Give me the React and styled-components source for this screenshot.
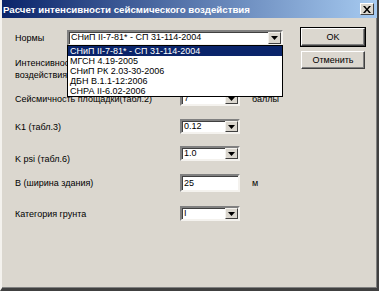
import React from 'react'
import styled, { createGlobalStyle } from 'styled-components'

const GlobalStyle = createGlobalStyle`
	html, body {
		margin: 0;
		padding: 0;
		background: #dbd7cf;
	}
	* {
		box-sizing: border-box;
	}
`

const norms = [
	'СНиП II-7-81* - СП 31-114-2004',
	'МГСН 4.19-2005',
	'СНиП РК 2.03-30-2006',
	'ДБН В.1.1-12:2006',
	'СНРА II-6.02-2006',
]

const rows = [
	{ label: 'Сейсмичность площадки(табл.2)', value: '7', unit: 'баллы', gap: 10 },
	{ label: 'K1 (табл.3)', value: '0.12', gap: 13 },
	{ label: 'K psi (табл.6)', value: '1.0', gap: 12, drop: 5 },
	{ label: 'B (ширина здания)', value: '25', unit: 'м', gap: 13, input: true },
	{ label: 'Категория грунта', value: 'I', gap: 14 },
]

export default function App() {
	return (
		<Window>
			<GlobalStyle />
			<TitleBar>
				<Title>Расчет интенсивности сейсмического воздействия</Title>
				<CloseButton>
					<svg width="8" height="7" viewBox="0 0 8 7">
						<path d="M0 0h2l2 2.5L6 0h2L5 3.5 8 7H6L4 4.5 2 7H0l3-3.5z" fill="#000" />
					</svg>
				</CloseButton>
			</TitleBar>
			<Body>
				<Form>
					<NormRow>
						<NormLabel>Нормы</NormLabel>
						<Combo width={216} tall>
							<Field>{norms[0]}</Field>
							<Arrow />
						</Combo>
					</NormRow>
					<DropList>
						{norms.map((n, i) => <Item key={i} selected={i === 0}>{n}</Item>)}
					</DropList>
					<TwoLineLabel>
						Интенсивность сейсмического<br />воздействия
					</TwoLineLabel>
					{rows.map((r, i) => (
						<Row key={i} gap={r.gap}>
							<Label drop={r.drop}>{r.label}</Label>
							{r.input ? (
								<TextInput>{r.value}</TextInput>
							) : (
								<Combo width={60}>
									<Field>{r.value}</Field>
									<Arrow />
								</Combo>
							)}
							{r.unit && <Unit>{r.unit}</Unit>}
						</Row>
					))}
				</Form>
				<Buttons>
					<Button isDefault>OK</Button>
					<Button>Отменить</Button>
				</Buttons>
			</Body>
		</Window>
	)
}

function Arrow() {
	return (
		<ArrowButton>
			<svg width="7" height="4" viewBox="0 0 7 4">
				<path d="M0 0h7L3.5 4z" fill="#000" />
			</svg>
		</ArrowButton>
	)
}

const Window = styled.div`
	width: 379px;
	height: 291px;
	display: flex;
	flex-direction: column;
	background: #dbd7cf;
	border-left: 2px solid #f4f2ee;
	border-right: 2px solid #404040;
	border-bottom: 3px solid #404040;
	box-shadow: inset -1px -1px 0 #808080;
	font-family: "Liberation Sans", Arial, sans-serif;
	font-size: 9px;
	color: #000;
	overflow: hidden;
`

const TitleBar = styled.div`
	height: 18px;
	flex-shrink: 0;
	display: flex;
	align-items: center;
	justify-content: space-between;
	padding: 0 3px 0 1px;
	background: linear-gradient(to right, #0a246a, #a6caf0);
`

const Title = styled.span`
	color: #fff;
	font-weight: bold;
	font-size: 9.7px;
`

const CloseButton = styled.div`
	width: 14px;
	height: 12px;
	display: flex;
	align-items: center;
	justify-content: center;
	background: #dbd7cf;
	border: 1px solid;
	border-color: #fff #404040 #404040 #fff;
`

const Body = styled.div`
	flex: 1;
	display: flex;
	padding: 12px 0 0 13px;
`

const Form = styled.div`
	position: relative;
	width: 284px;
	flex-shrink: 0;
	display: flex;
	flex-direction: column;
`

const NormRow = styled.div`
	display: grid;
	grid-template-columns: 52px 216px;
	align-items: center;
	height: 16px;
`

const NormLabel = styled.div`
	white-space: nowrap;
`

const Row = styled.div`
	display: grid;
	grid-template-columns: 165px 60px auto;
	align-items: center;
	margin-top: ${p => p.gap}px;
`

const Label = styled.div`
	white-space: nowrap;
	overflow: hidden;
	position: relative;
	top: ${p => p.drop || 0}px;
`

const TwoLineLabel = styled.div`
	margin-top: 11px;
	line-height: 12px;
	height: 24px;
`

const Combo = styled.div`
	width: ${p => p.width}px;
	height: ${p => (p.tall ? 16 : 15)}px;
	display: flex;
	background: #fff;
	border: 2px solid;
	border-color: #808080 #f4f2ee #f4f2ee #808080;
	box-shadow: inset 1px 1px 0 #404040;
`

const Field = styled.div`
	flex: 1;
	padding-left: 2px;
	line-height: 11px;
	white-space: nowrap;
	overflow: hidden;
`

const ArrowButton = styled.div`
	width: 13px;
	display: flex;
	align-items: center;
	justify-content: center;
	background: #dbd7cf;
	border: 1px solid;
	border-color: #f4f2ee #404040 #404040 #f4f2ee;
`

const TextInput = styled.div`
	width: 60px;
	height: 18px;
	padding: 2px 0 0 2px;
	background: #fff;
	border: 2px solid;
	border-color: #808080 #f4f2ee #f4f2ee #808080;
	box-shadow: inset 1px 1px 0 #404040;
	line-height: 11px;
`

const Unit = styled.span`
	margin-left: 12px;
`

const DropList = styled.div`
	position: absolute;
	left: 52px;
	top: 15px;
	width: 216px;
	height: 52px;
	display: flex;
	flex-direction: column;
	background: #fff;
	border: 1px solid #000;
	z-index: 2;
`

const Item = styled.div`
	flex: 1;
	padding-left: 2px;
	line-height: 10px;
	white-space: nowrap;
	background: ${p => (p.selected ? '#0a246a' : '#fff')};
	color: ${p => (p.selected ? '#fff' : '#000')};
`

const Buttons = styled.div`
	display: flex;
	flex-direction: column;
	gap: 5px;
	margin-left: 2px;
	margin-top: -2px;
`

const Button = styled.div`
	width: 64px;
	height: 18px;
	display: flex;
	align-items: center;
	justify-content: center;
	background: #dbd7cf;
	border: 1px solid;
	border-color: #fff #404040 #404040 #fff;
	box-shadow: ${p => (p.isDefault ? '0 0 0 1px #000, inset -1px -1px 0 #808080' : 'inset -1px -1px 0 #808080')};
`
